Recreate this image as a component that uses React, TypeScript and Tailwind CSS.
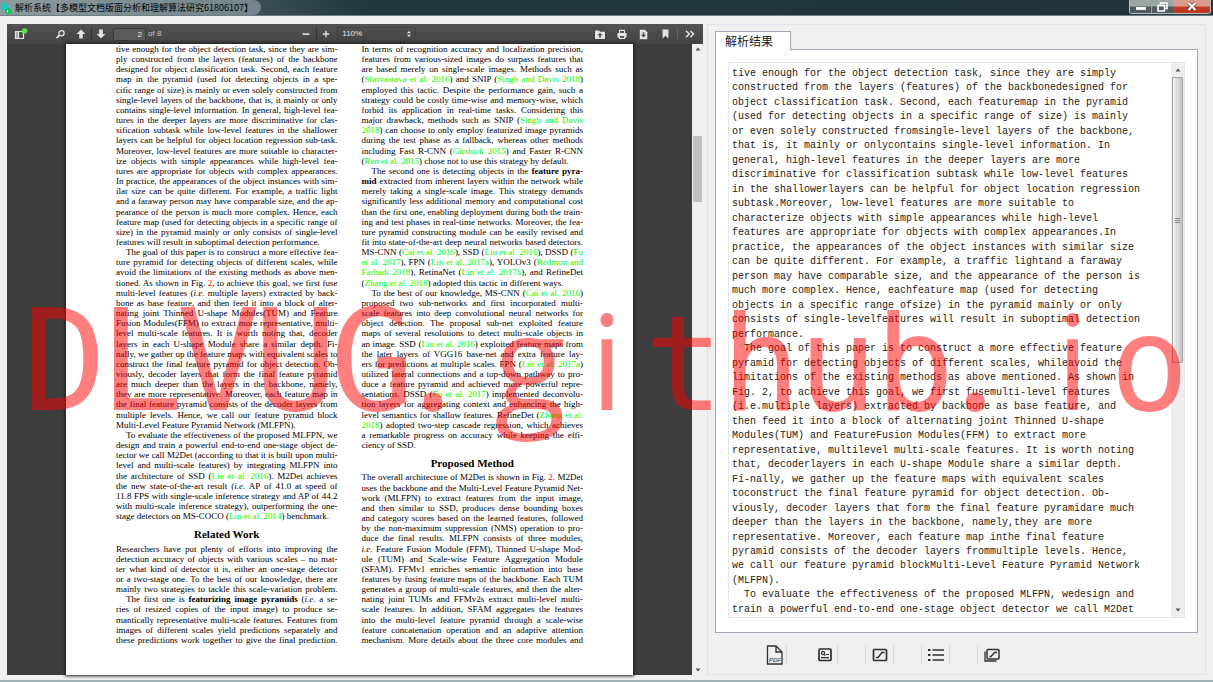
import React from "react";

const LEFT_TOP = `tive enough for the object detection task, since they are sim-
ply constructed from the layers (features) of the backbone
designed for object classification task. Second, each feature
map in the pyramid (used for detecting objects in a spe-
cific range of size) is mainly or even solely constructed from
single-level layers of the backbone, that is, it mainly or only
contains single-level information. In general, high-level fea-
tures in the deeper layers are more discriminative for clas-
sification subtask while low-level features in the shallower
layers can be helpful for object location regression sub-task.
Moreover, low-level features are more suitable to character-
ize objects with simple appearances while high-level fea-
tures are appropriate for objects with complex appearances.
In practice, the appearances of the object instances with sim-
ilar size can be quite different. For example, a traffic light
and a faraway person may have comparable size, and the ap-
pearance of the person is much more complex. Hence, each
feature map (used for detecting objects in a specific range of
size) in the pyramid mainly or only consists of single-level
features will result in suboptimal detection performance.|
>The goal of this paper is to construct a more effective fea-
ture pyramid for detecting objects of different scales, while
avoid the limitations of the existing methods as above men-
tioned. As shown in Fig. ~2~, to achieve this goal, we first fuse
multi-level features (_i.e._ multiple layers) extracted by back-
bone as base feature, and then feed it into a block of alter-
nating joint Thinned U-shape Modules(TUM) and Feature
Fusion Modules(FFM) to extract more representative, multi-
level multi-scale features. It is worth noting that, decoder
layers in each U-shape Module share a similar depth. Fi-
nally, we gather up the feature maps with equivalent scales to
construct the final feature pyramid for object detection. Ob-
viously, decoder layers that form the final feature pyramid
are much deeper than the layers in the backbone, namely,
they are more representative. Moreover, each feature map in
the final feature pyramid consists of the decoder layers from
multiple levels. Hence, we call our feature pyramid block
Multi-Level Feature Pyramid Network (MLFPN).|
>To evaluate the effectiveness of the proposed MLFPN, we
design and train a powerful end-to-end one-stage object de-
tector we call M2Det (according to that it is built upon multi-
level and multi-scale features) by integrating MLFPN into
the architecture of SSD (^Liu et al. 2016^). M2Det achieves
the new state-of-the-art result (_i.e._ AP of 41.0 at speed of
11.8 FPS with single-scale inference strategy and AP of 44.2
with multi-scale inference strategy), outperforming the one-
stage detectors on MS-COCO (^Lin et al. 2014^) benchmark.|
#Related Work
Researchers have put plenty of efforts into improving the
detection accuracy of objects with various scales – no mat-
ter what kind of detector it is, either an one-stage detector
or a two-stage one. To the best of our knowledge, there are
mainly two strategies to tackle this scale-variation problem.
>The first one is *featurizing image pyramids* (_i.e._ a se-
ries of resized copies of the input image) to produce se-
mantically representative multi-scale features. Features from
images of different scales yield predictions separately and
these predictions work together to give the final prediction.`;

const RIGHT_TOP = `In terms of recognition accuracy and localization precision,
features from various-sized images do surpass features that
are based merely on single-scale images. Methods such as
(^Shrivastava et al. 2016^) and SNIP (^Singh and Davis 2018^)
employed this tactic. Despite the performance gain, such a
strategy could be costly time-wise and memory-wise, which
forbid its application in real-time tasks. Considering this
major drawback, methods such as SNIP (^Singh and Davis^
^2018^) can choose to only employ featurized image pyramids
during the test phase as a fallback, whereas other methods
including Fast R-CNN (^Girshick 2015^) and Faster R-CNN
(^Ren et al. 2015^) chose not to use this strategy by default.|
>The second one is detecting objects in the *feature pyra-*
*mid* extracted from inherent layers within the network while
merely taking a single-scale image. This strategy demands
significantly less additional memory and computational cost
than the first one, enabling deployment during both the train-
ing and test phases in real-time networks. Moreover, the fea-
ture pyramid constructing module can be easily revised and
fit into state-of-the-art deep neural networks based detectors.
MS-CNN (^Cai et al. 2016^), SSD (^Liu et al. 2016^), DSSD (^Fu^
^et al. 2017^), FPN (^Lin et al. 2017a^), YOLOv3 (^Redmon and^
^Farhadi 2018^), RetinaNet (^Lin et al. 2017b^), and RefineDet
(^Zhang et al. 2018^) adopted this tactic in different ways.|
>To the best of our knowledge, MS-CNN (^Cai et al. 2016^)
proposed two sub-networks and first incorporated multi-
scale features into deep convolutional neural networks for
object detection. The proposal sub-net exploited feature
maps of several resolutions to detect multi-scale objects in
an image. SSD (^Liu et al. 2016^) exploited feature maps from
the later layers of VGG16 base-net and extra feature lay-
ers for predictions at multiple scales. FPN (^Lin et al. 2017a^)
utilized lateral connections and a top-down pathway to pro-
duce a feature pyramid and achieved more powerful repre-
sentations. DSSD (^Fu et al. 2017^) implemented deconvolu-
tion layers for aggregating context and enhancing the high-
level semantics for shallow features. RefineDet (^Zhang et al.^
^2018^) adopted two-step cascade regression, which achieves
a remarkable progress on accuracy while keeping the effi-
ciency of SSD.|
#Proposed Method
The overall architecture of M2Det is shown in Fig. ~2~. M2Det
uses the backbone and the Multi-Level Feature Pyramid Net-
work (MLFPN) to extract features from the input image,
and then similar to SSD, produces dense bounding boxes
and category scores based on the learned features, followed
by the non-maximum suppression (NMS) operation to pro-
duce the final results. MLFPN consists of three modules,
_i.e._ Feature Fusion Module (FFM), Thinned U-shape Mod-
ule (TUM) and Scale-wise Feature Aggregation Module
(SFAM). FFMv1 enriches semantic information into base
features by fusing feature maps of the backbone. Each TUM
generates a group of multi-scale features, and then the alter-
nating joint TUMs and FFMv2s extract multi-level multi-
scale features. In addition, SFAM aggregates the features
into the multi-level feature pyramid through a scale-wise
feature concatenation operation and an adaptive attention
mechanism. More details about the three core modules and`;

const RESULT = `tive enough for the object detection task, since they are simply
constructed from the layers (features) of the backbonedesigned for
object classification task. Second, each featuremap in the pyramid
(used for detecting objects in a specific range of size) is mainly
or even solely constructed fromsingle-level layers of the backbone,
that is, it mainly or onlycontains single-level information. In
general, high-level features in the deeper layers are more
discriminative for classification subtask while low-level features
in the shallowerlayers can be helpful for object location regression
subtask.Moreover, low-level features are more suitable to
characterize objects with simple appearances while high-level
features are appropriate for objects with complex appearances.In
practice, the appearances of the object instances with similar size
can be quite different. For example, a traffic lightand a faraway
person may have comparable size, and the appearance of the person is
much more complex. Hence, eachfeature map (used for detecting
objects in a specific range ofsize) in the pyramid mainly or only
consists of single-levelfeatures will result in suboptimal detection
performance.
  The goal of this paper is to construct a more effective feature
pyramid for detecting objects of different scales, whileavoid the
limitations of the existing methods as above mentioned. As shown in
Fig. 2, to achieve this goal, we first fusemulti-level features
(i.e.multiple layers) extracted by backbone as base feature, and
then feed it into a block of alternating joint Thinned U-shape
Modules(TUM) and FeatureFusion Modules(FFM) to extract more
representative, multilevel multi-scale features. It is worth noting
that, decoderlayers in each U-shape Module share a similar depth.
Fi-nally, we gather up the feature maps with equivalent scales
toconstruct the final feature pyramid for object detection. Ob-
viously, decoder layers that form the final feature pyramidare much
deeper than the layers in the backbone, namely,they are more
representative. Moreover, each feature map inthe final feature
pyramid consists of the decoder layers frommultiple levels. Hence,
we call our feature pyramid blockMulti-Level Feature Pyramid Network
(MLFPN).
  To evaluate the effectiveness of the proposed MLFPN, wedesign and
train a powerful end-to-end one-stage object detector we call M2Det`;

const MARKS: Record<string, string> = {
  "^": "text-[#00ff00]",
  "~": "text-[#ff0000]",
  "*": "font-bold",
  _: "italic",
};

function Inline({ text }: { text: string }) {
  return (
    <>
      {text.split(/(\^[^^]+\^|~[^~]+~|\*[^*]+\*|_[^_]+_)/).map((part, i) =>
        part.length > 2 && MARKS[part[0]] ? (
          <span key={i} className={MARKS[part[0]]}>
            {part.slice(1, -1)}
          </span>
        ) : (
          part
        ),
      )}
    </>
  );
}

function PaperColumn({ source }: { source: string }) {
  return (
    <div className="flex min-w-0 flex-col justify-between">
      {source.split("\n").map((line, i) => {
        if (line[0] === "#") {
          return (
            <h2 key={i} className="h-[22px] pt-[6px] text-center text-[11px] leading-[14px] font-bold">
              {line.slice(1)}
            </h2>
          );
        }
        const indent = line[0] === ">" ? "pl-[10px] " : "";
        const last = line.endsWith("|");
        const text = line.replace(/^>|\|$/g, "");
        return (
          <p
            key={i}
            className={
              indent +
              (last ? "h-[10px] whitespace-nowrap" : "h-[10px] whitespace-nowrap [text-align-last:justify]")
            }
          >
            <Inline text={text} />
          </p>
        );
      })}
    </div>
  );
}

function ToolButton({ label, className = "", children }: { label: string; className?: string; children: React.ReactNode }) {
  return (
    <button aria-label={label} className={"flex h-4 shrink-0 items-center justify-center text-[#e4e4e4] " + className}>
      {children}
    </button>
  );
}

function ViewerToolbar() {
  return (
    <div className="flex h-5 shrink-0 items-center bg-linear-to-b from-[#525252] to-[#434343] pr-[7px] pl-[7px] text-[8px] text-[#e4e4e4]">
      <ToolButton label="Toggle sidebar" className="w-[14px]">
        <svg width="14" height="13" viewBox="0 0 14 13">
          <path d="M1.5 3.5h8v7h-8zM4.5 3.5v7" fill="none" stroke="currentColor" strokeWidth="1.2" />
          <path d="M1 3h3.5v8H1z" fill="currentColor" opacity=".6" />
          <circle cx="10.5" cy="3" r="2.8" fill="#5fdc52" />
        </svg>
      </ToolButton>
      <ToolButton label="Find" className="ml-[26px] w-3">
        <svg width="11" height="11" viewBox="0 0 11 11" fill="none" stroke="currentColor">
          <circle cx="6.5" cy="4.2" r="2.6" strokeWidth="1.3" />
          <path d="M4.6 6.2 1.6 9.2" strokeWidth="1.9" />
        </svg>
      </ToolButton>
      <ToolButton label="Previous page" className="ml-[9px] w-3">
        <svg width="10" height="10" viewBox="0 0 10 10" fill="currentColor">
          <path d="M5 .5 9.4 5H6.8v4.5H3.2V5H.6z" />
        </svg>
      </ToolButton>
      <span className="ml-1 h-3 w-px bg-[#343434]" />
      <ToolButton label="Next page" className="ml-[3px] w-3">
        <svg width="10" height="10" viewBox="0 0 10 10" fill="currentColor">
          <path d="M5 9.5.6 5h2.6V.5h3.6V5h2.6z" />
        </svg>
      </ToolButton>
      <input
        aria-label="Page"
        defaultValue="2"
        className="ml-[6px] h-[13px] w-[33px] rounded-[1px] border border-[#393939] bg-[#5a5a5a] pr-[3px] text-right text-[8px]"
      />
      <span className="ml-[2px] text-[#c8c8c8]">of 8</span>
      <div className="min-w-2 grow-[140]" />
      <ToolButton label="Zoom out" className="w-3">
        <svg width="8" height="8" viewBox="0 0 8 8" fill="currentColor">
          <path d="M.5 3.3h7v1.6h-7z" />
        </svg>
      </ToolButton>
      <span className="ml-1 h-3 w-px bg-[#343434]" />
      <ToolButton label="Zoom in" className="ml-[3px] w-3">
        <svg width="8" height="8" viewBox="0 0 8 8" fill="currentColor">
          <path d="M3.3.8h1.4v2.5h2.5v1.4H4.7v2.5H3.3V4.7H.8V3.3h2.5z" />
        </svg>
      </ToolButton>
      <div className="ml-[5px] flex h-[14px] w-[79px] items-center border border-[#434343] pr-1 pl-[4px]">
        <select aria-label="Zoom" className="min-w-0 flex-1 appearance-none bg-transparent text-[8px] outline-none">
          <option>110%</option>
        </select>
        <svg width="4" height="6" viewBox="0 0 4 6" fill="currentColor">
          <path d="M2 0 4 2.3H0zM2 6 0 3.7h4z" />
        </svg>
      </div>
      <div className="min-w-2 grow-[179]" />
      <ToolButton label="Open file" className="w-3">
        <svg width="12" height="11" viewBox="0 0 12 11">
          <path d="M1 1.5h4l1 1.3h5V10H1z" fill="currentColor" />
          <path d="M6 4 8.5 6.3H6.8V8.8H5.2V6.3H3.5z" fill="#4a4a4a" />
        </svg>
      </ToolButton>
      <ToolButton label="Print" className="ml-[10px] w-3">
        <svg width="12" height="11" viewBox="0 0 12 11">
          <path d="M3 .8h6V4h1.5v4.6H9V10H3V8.6H1.5V4H3z" fill="currentColor" />
          <path d="M4 2h4v2H4zM4 7h4v2H4z" fill="#555" />
        </svg>
      </ToolButton>
      <ToolButton label="Download" className="ml-[9px] w-3">
        <svg width="9" height="11" viewBox="0 0 9 11">
          <path d="M.8.8h5l2.5 2.5v6.9H.8z" fill="currentColor" />
          <path d="M3.8 3.5h1.5v2.3H7L4.5 8.6 2 5.8h1.8z" fill="#4a4a4a" />
        </svg>
      </ToolButton>
      <ToolButton label="Bookmark" className="ml-[10px] w-3">
        <svg width="7" height="10" viewBox="0 0 7 10" fill="currentColor">
          <path d="M.6.6h5.8v8.9L3.5 6.8.6 9.5z" />
        </svg>
      </ToolButton>
      <span className="ml-[6px] h-3 w-px bg-[#606060]" />
      <ToolButton label="More tools" className="ml-[6px] w-3">
        <svg width="10" height="8" viewBox="0 0 10 8" fill="none" stroke="currentColor" strokeWidth="1.5">
          <path d="m1 .8 3.2 3.2L1 7.2M5.3.8 8.5 4 5.3 7.2" />
        </svg>
      </ToolButton>
    </div>
  );
}

function Arrow({ down = false }: { down?: boolean }) {
  return (
    <svg width="6" height="4" viewBox="0 0 6 4" fill="#505050">
      <path d={down ? "M.5.5h5L3 3.5z" : "M3 .5 5.5 3.5H.5z"} />
    </svg>
  );
}

function Viewer() {
  return (
    <section aria-label="PDF" className="flex min-w-0 flex-[696] flex-col">
      <ViewerToolbar />
      <div className="flex flex-1">
        <div className="flex flex-1 bg-[#3d3d3d] px-[59px]">
          <article className="grid flex-1 grid-cols-2 gap-6 bg-white px-[50px] pb-[30px] font-['Liberation_Serif',serif] text-[9px] leading-[10px] text-black shadow-[0_0_3px_1px_#1c1c1c]">
            <PaperColumn source={LEFT_TOP} />
            <PaperColumn source={RIGHT_TOP} />
          </article>
        </div>
        <div className="flex w-[11px] flex-col items-center bg-[#f1f1f1] py-[3px]">
          <Arrow />
          <div className="mt-[85px] h-[66px] w-[9px] bg-[#c1c1c1]" />
          <div className="flex-1" />
          <Arrow down />
        </div>
      </div>
    </section>
  );
}

const ICON = "h-5 w-5 fill-none stroke-[#2f2f2f]";

function Separator() {
  return <span className="h-[19px] w-px bg-[#d9d9d9]" />;
}

function ResultToolbar() {
  return (
    <div className="flex h-[39px] items-center pt-1 pl-[48px]">
      <button aria-label="PDF file" className="flex w-[23px] justify-center">
        <svg viewBox="0 0 20 20" className={ICON}>
          <path d="M2.5 1H11l6 6v12H2.5zM11 1v6h6" strokeWidth="1.3" />
          <text x="4" y="16.5" fontSize="6" className="fill-[#2f2f2f] stroke-none font-['Liberation_Sans',sans-serif] italic">PDF</text>
        </svg>
      </button>
      <Separator />
      <button aria-label="Text recognition" className="ml-[26px] flex w-[24px] justify-center">
        <svg viewBox="0 0 20 20" className={ICON}>
          <rect x="4" y="4" width="12" height="11.5" rx="1" strokeWidth="1.7" />
          <circle cx="8" cy="8" r="1.6" strokeWidth="1.2" />
          <path d="M9 9.5l1.500 1M11 9.500h3M6 12.700h8" strokeWidth="1.2" />
        </svg>
      </button>
      <Separator />
      <span className="w-[27px]" />
      <Separator />
      <button aria-label="Figures" className="flex w-[27px] justify-center">
        <svg viewBox="0 0 20 20" className={ICON}>
          <rect x="3.5" y="4.5" width="13" height="11" rx="1" strokeWidth="1.7" />
          <path d="M6 12.500h2l4-5h2.500" strokeWidth="1.4" />
        </svg>
      </button>
      <Separator />
      <span className="w-[27px]" />
      <Separator />
      <button aria-label="List" className="flex w-[27px] justify-center">
        <svg viewBox="0 0 20 20" className={ICON}>
          <path d="M2 5h2.500M2 10h2.500M2 15h2.500" strokeWidth="2" />
          <path d="M6.500 5H18M6.500 10H18M6.500 15H18" strokeWidth="1.3" />
        </svg>
      </button>
      <Separator />
      <span className="w-[27px]" />
      <Separator />
      <button aria-label="All figures" className="flex w-[27px] justify-center">
        <svg viewBox="0 0 20 20" className={ICON}>
          <rect x="5" y="4.5" width="12" height="9.5" rx="1" strokeWidth="1.5" />
          <path d="M3 6.500V16h11.500M7.500 11.500H9l3.500-4H15" strokeWidth="1.3" />
        </svg>
      </button>
    </div>
  );
}

function ResultPanel() {
  return (
    <section className="ml-1 flex min-w-0 flex-[483] flex-col border border-[#dfe6e8] px-[7px] pt-[6px] pb-[2px]">
      <div role="tablist" className="z-10 -mb-px flex">
        <button
          role="tab"
          aria-selected="true"
          className="h-[19px] w-[76px] border border-b-0 border-[#a3a5b4] bg-white pr-2 text-center font-['Noto_Sans_CJK_SC',sans-serif] text-[12px] leading-[18px] text-[#1a1a1a]"
        >
          解析结果
        </button>
      </div>
      <div role="tabpanel" className="flex flex-1 border border-[#a3a5b4] bg-white px-[12px] pt-[12px] pb-[14px]">
        <div className="flex min-w-0 flex-1 border border-[#e3e6ea]">
          <div className="flex min-w-0 flex-1 flex-col justify-between overflow-hidden pt-1 pl-[3px] font-['Liberation_Mono',monospace] text-[10px] leading-[14px] text-[#1c1c1c]">
            {RESULT.split("\n").map((line, i) => (
              <p key={i} className="h-[14px] whitespace-pre">
                {line}
              </p>
            ))}
          </div>
          <div className="flex w-[13px] flex-col items-center bg-[#efefef] pb-[5px]">
            <div className="flex h-[14px] items-center">
              <Arrow />
            </div>
            <div className="flex h-[286px] w-[11px] flex-col items-center justify-center gap-px rounded-[1px] border border-[#a5a5a5] bg-linear-to-r from-[#f3f3f3] to-[#c3c3c6]">
              <span className="h-px w-[5px] bg-[#8b8b8b]" />
              <span className="h-px w-[5px] bg-[#8b8b8b]" />
              <span className="h-px w-[5px] bg-[#8b8b8b]" />
            </div>
            <div className="flex-1" />
            <Arrow down />
          </div>
        </div>
      </div>
      <ResultToolbar />
    </section>
  );
}

function TitleBar() {
  return (
    <header className="flex h-4 shrink-0 items-start justify-between border-b border-[#6d7f84] bg-linear-to-r from-[#7c8d91] via-[#22383f] via-30% to-[#20343a]">
      <div className="flex h-[15px] items-center gap-[3px] rounded-r-lg bg-linear-to-r from-[#8b9a9d] to-[#71858a] pr-2">
        <svg width="12" height="14" viewBox="0 0 12 14">
          <path d="M1 3.5 4 1.5l3.5 2v4l-3 2L1 7.5z" fill="#19c9cf" />
          <path d="M5 8.5 8 6.5l3.5 2V12L8 13.8 5 12z" fill="#12c85c" />
          <path d="M7 9.5 8 8.8v3l-1-.6z" fill="#d9ffe9" />
        </svg>
        <h1 className="font-['Noto_Sans_CJK_SC',sans-serif] text-[9px] leading-[15px] whitespace-nowrap text-black">
          解析系统【多模型文档版面分析和理解算法研究61806107】
        </h1>
      </div>
      <div className="mr-[2px] flex h-[14px] overflow-hidden rounded-b-[3px] border border-t-0 border-[#b5c0c2]">
        <button aria-label="Minimize" className="flex w-[22px] items-end justify-center border-r border-[#9aa5a8] bg-linear-to-b from-[#9ba6a8] from-45% to-[#4b5b60] to-55% pb-[3px]">
          <span className="h-[3px] w-[10px] border border-[#eee] bg-white" />
        </button>
        <button aria-label="Restore" className="flex w-[21px] items-center justify-center bg-linear-to-b from-[#9ba6a8] from-45% to-[#4b5b60] to-55%">
          <svg width="11" height="10" viewBox="0 0 11 10" fill="none" stroke="#fff" strokeWidth="1.6">
            <path d="M3.5 2.5V1H10v5.5H8.5M1 3.5h6.500V9H1z" />
          </svg>
        </button>
        <button aria-label="Close" className="flex w-[37px] items-center justify-center bg-linear-to-b from-[#dc9a8c] from-45% to-[#bf3a20] to-55%">
          <svg width="10" height="9" viewBox="0 0 10 9">
            <path d="M1.5 1l7 7M8.5 1l-7 7" stroke="#5b2a22" strokeWidth="3.4" />
            <path d="M1.5 1l7 7M8.5 1l-7 7" stroke="#fff" strokeWidth="2.2" />
          </svg>
        </button>
      </div>
    </header>
  );
}

function glyphClass(ch: string) {
  if (ch === ".") return "flex w-0 flex-1 justify-start pl-1 font-['Open_Sans',sans-serif] text-[132px] font-semibold";
  if (ch === "g" || ch === "i")
    return "flex w-0 flex-1 justify-center font-['Open_Sans',sans-serif] text-[132px] font-medium";
  if (ch >= "A" && ch <= "Z")
    return "flex w-0 flex-1 justify-center font-['DejaVu_Sans_Mono',monospace] text-[140px]";
  return "flex w-0 flex-1 justify-center font-['DejaVu_Sans_Mono',monospace] text-[132px]";
}

function Watermark() {
  return (
    <div className="pointer-events-none absolute inset-x-0 top-[269px] z-20 flex items-baseline pr-[25px] pl-[26px] leading-[180px] text-[#ff0000] opacity-50">
      {"DLVUG.github.io".split("").map((ch, i) => (
        <span key={i} className={glyphClass(ch)}>
          {ch}
        </span>
      ))}
    </div>
  );
}

export default function App() {
  return (
    <div className="relative flex min-h-screen flex-col overflow-hidden bg-[#f0f0f0] font-['Liberation_Sans',sans-serif]">
      <TitleBar />
      <main className="flex flex-1 px-[7px] pt-2 pb-[5px]">
        <Viewer />
        <ResultPanel />
      </main>
      <div className="h-[2px] bg-[#9fb3b5]" />
      <Watermark />
    </div>
  );
}
